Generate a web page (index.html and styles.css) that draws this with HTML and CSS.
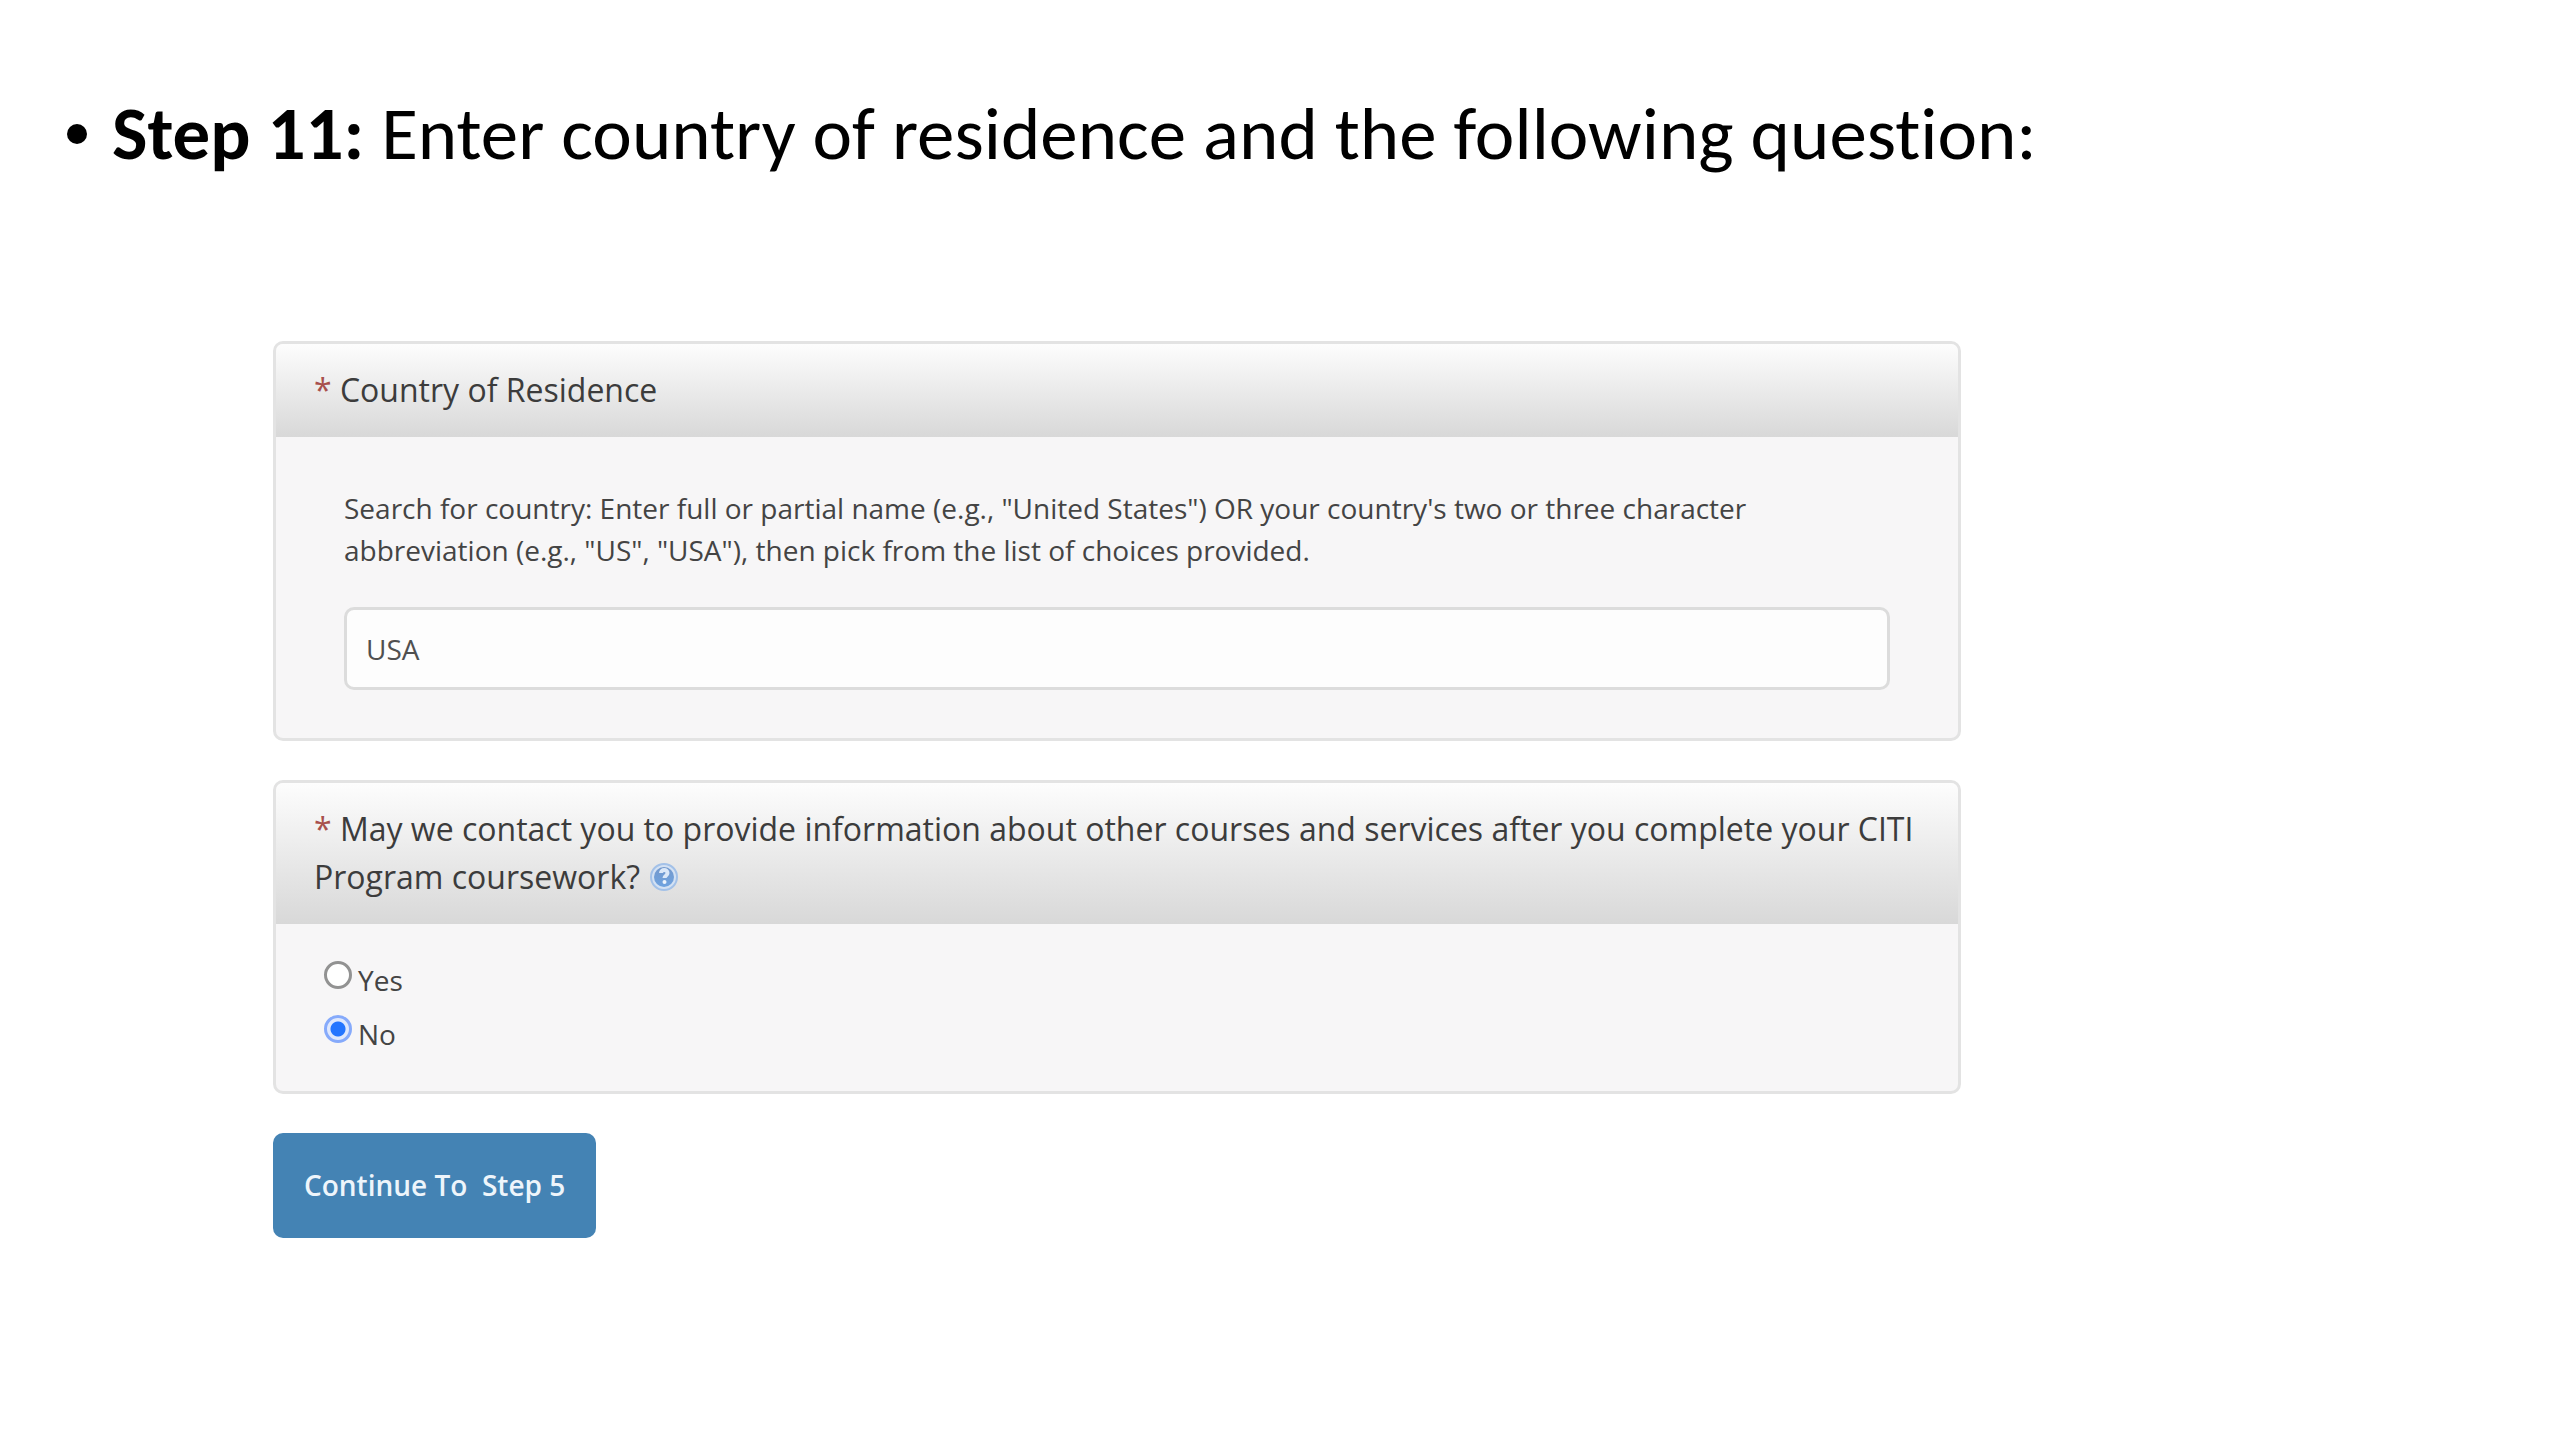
FILE: index.html
```html
<!DOCTYPE html>
<html lang="en">
<head>
  <meta charset="utf-8">
  <meta name="viewport" content="width=device-width, initial-scale=1">
  <title>Step 11: Country of residence</title>
  <link rel="stylesheet" href="styles.css">
</head>
<body>
  <main class="page">
    <ul class="steps">
      <li class="step"><span class="bullet" aria-hidden="true"></span><span><strong>Step 11:</strong> Enter country of residence and the following question:</span></li>
    </ul>

    <form class="form">
      <section class="panel">
        <h2 class="panel-head"><span class="required">*</span> Country of Residence</h2>
        <div class="panel-body search">
          <label class="hint" for="country">Search for country: Enter full or partial name (e.g., "United States") OR your country's two or three character abbreviation (e.g., "US", "USA"), then pick from the list of choices provided.</label>
          <input class="field" id="country" type="text" value="USA">
        </div>
      </section>

      <section class="panel" role="radiogroup" aria-labelledby="contact-title">
        <h2 class="panel-head" id="contact-title"><span class="required">*</span> May we contact you to provide information about other courses and services after you complete your CITI Program coursework?
          <svg class="help" viewBox="0 0 28 28" role="img" aria-label="Help">
            <defs>
              <linearGradient id="ball" x1="0" y1="0" x2="0" y2="1">
                <stop offset="0" stop-color="#7398cc"/>
                <stop offset="1" stop-color="#6fa3e0"/>
              </linearGradient>
            </defs>
            <circle cx="14" cy="14" r="13" fill="#d3e1f3" stroke="#a3c1e8" stroke-width="2"/>
            <circle cx="14" cy="14" r="10" fill="url(#ball)"/>
            <path d="M11 10c0-4 6.500-4 6.500 0 0 3-3 2.500-3 5" fill="none" stroke="#dbe8f8" stroke-width="4"/>
            <circle cx="14.500" cy="19" r="2" fill="#edf4fd"/>
          </svg>
        </h2>
        <div class="panel-body choices">
          <label class="choice"><input class="radio" type="radio" name="contact" value="yes"><span>Yes</span></label>
          <label class="choice"><input class="radio" type="radio" name="contact" value="no" checked><span>No</span></label>
        </div>
      </section>

      <button class="submit" type="button">Continue To&nbsp; Step 5</button>
    </form>
  </main>
</body>
</html>
```
FILE: styles.css
```css
* {
  box-sizing: border-box;
}

body {
  margin: 0;
  background: #fff;
  color: #444;
  font-family: "Open Sans", "Noto Sans", sans-serif;
}

.page {
  padding: 90px 67px;
}

.steps {
  margin: 0;
  padding: 0;
  list-style: none;
}

.step {
  display: flex;
  align-items: center;
  gap: 25px;
  color: #000;
  font-family: Carlito, Calibri, Lato, sans-serif;
  font-size: 75px;
  font-variant-ligatures: none;
  line-height: 88px;
}

.bullet {
  flex: none;
  width: 20px;
  height: 20px;
  border-radius: 50%;
  background: #000;
}

.form {
  display: flex;
  flex-direction: column;
  align-items: flex-start;
  gap: 39px;
  max-width: 1894px;
  margin-top: 163px;
  padding-left: 206px;
}

.panel {
  width: 100%;
  overflow: hidden;
  border: 3px solid #e3e3e3;
  border-radius: 10px;
  background: #f7f6f7;
}

.panel-head {
  margin: 0;
  padding: 22px 38px 23px;
  background: linear-gradient(#fdfdfd, #d8d8d8);
  color: #3c3c3c;
  font-size: 32px;
  font-weight: 400;
  line-height: 48px;
}

.required {
  color: #a8504c;
}

.help {
  width: 28px;
  height: 28px;
  margin-left: 2px;
  vertical-align: -2px;
}

.search {
  display: flex;
  flex-direction: column;
  gap: 36px;
  padding: 50px 68px 48px;
}

.hint {
  font-size: 28px;
  line-height: 42px;
}

.field {
  width: 100%;
  height: 83px;
  padding: 0 19px;
  border: 3px solid #dcdcdc;
  border-radius: 10px;
  background: #fdfdfd;
  color: #505050;
  font: inherit;
  font-size: 28px;
}

.choices {
  padding: 29px 48px 30px;
}

.choice {
  display: flex;
  align-items: flex-start;
  gap: 6px;
  font-size: 28px;
  line-height: 54px;
}

.radio {
  appearance: none;
  flex: none;
  width: 28px;
  height: 28px;
  margin: 8px 0 0;
  border: 3px solid #929292;
  border-radius: 50%;
  background: #fff;
}

.radio:checked {
  border-color: #86aafb;
  background: radial-gradient(circle, #2475ff 7px, #dfe8fd 8px);
}

.submit {
  padding: 0 31px;
  border: 0;
  border-radius: 10px;
  background: #4483b4;
  color: #eef5fb;
  font: inherit;
  font-size: 28px;
  font-weight: 600;
  line-height: 105px;
}
```
